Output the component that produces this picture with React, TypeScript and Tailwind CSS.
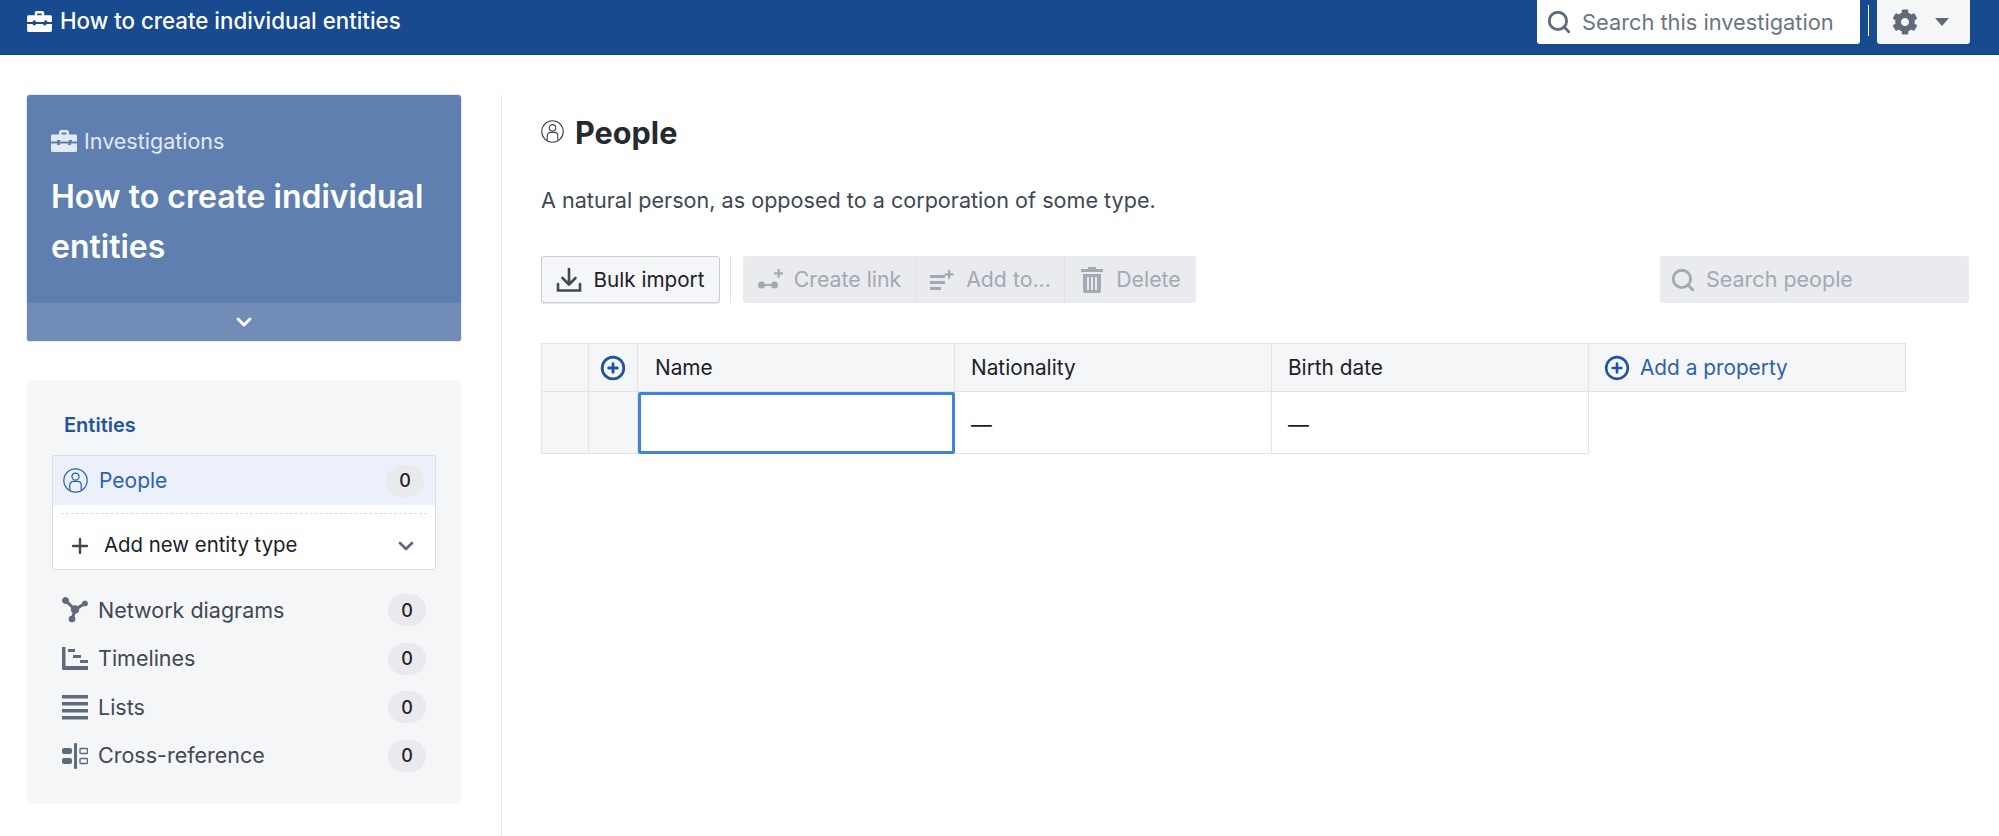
import React from 'react';
import { ChevronDown, CirclePlus, Plus, Search } from 'lucide-react';
import { FaCog } from 'react-icons/fa';

const BriefcaseIcon: React.FC<{ className?: string }> = ({ className }) => (
  <svg className={className} viewBox="0 0 26 22" fill="currentColor">
    <path d="M8 5V2.2C8 1 9 0 10.2 0h5.6C17 0 18 1 18 2.2V5h-2.6V2.6h-4.8V5z" />
    <path d="M1.5 4.5h23c.8 0 1.5.7 1.5 1.5v5.5h-5V10h-3v1.5H9V10H6v1.5H0V6c0-.8.7-1.5 1.5-1.5z" />
    <path d="M0 13.5h6V15h3v-1.5h8V15h3v-1.5h6v7c0 .8-.7 1.5-1.5 1.5h-23C.7 22 0 21.3 0 20.5z" />
  </svg>
);

const PersonIcon: React.FC<{ className?: string }> = ({ className }) => (
  <svg className={className} viewBox="0 0 24 24" fill="none" stroke="currentColor" strokeWidth="1.2">
    <circle cx="12" cy="12" r="11.2" />
    <circle cx="12" cy="8.2" r="3.4" />
    <path d="M6.5 21v-4.5c0-2.2 1.6-3.6 3.4-3.6h4.2c1.8 0 3.4 1.4 3.4 3.6V21" />
  </svg>
);

const NetworkIcon = () => (
  <svg className="w-[26px] h-[26px]" viewBox="0 0 26 26" fill="#5f6b7a" stroke="#5f6b7a">
    <path d="M4 4l9 8.5L22 7M13 12.500l-2.500 9" strokeWidth="3" fill="none" />
    <circle cx="3.500" cy="3.500" r="3" />
    <circle cx="23" cy="6.500" r="2.500" />
    <circle cx="13" cy="12.500" r="3.800" />
    <circle cx="10" cy="22" r="3" />
  </svg>
);

const TimelineIcon = () => (
  <svg className="w-[26px] h-[26px]" viewBox="0 0 26 26" fill="#5f6b7a">
    <path d="M0 1h3.500v19H26v4H1.500A1.500 1.500 0 0 1 0 22.500z" />
    <rect x="6" y="3" width="7" height="3" />
    <rect x="11" y="9" width="8" height="3" />
    <rect x="18" y="14" width="8" height="3" />
  </svg>
);

const ListIcon = () => (
  <svg className="w-[26px] h-[26px]" viewBox="0 0 26 26" fill="#5f6b7a">
    <rect x="0" y="1" width="26" height="3.500" />
    <rect x="0" y="8" width="26" height="3.500" />
    <rect x="0" y="15" width="26" height="3.500" />
    <rect x="0" y="22" width="26" height="3.500" />
  </svg>
);

const CrossRefIcon = () => (
  <svg className="w-[26px] h-[26px]" viewBox="0 0 26 26" fill="#5f6b7a">
    <rect x="12" y="0" width="3" height="26" rx="1" />
    <rect x="0" y="5" width="10" height="6" rx="2" />
    <rect x="0" y="15" width="10" height="6" rx="2" />
    <rect x="18" y="5.500" width="7.500" height="5" rx="1" fill="none" stroke="#5f6b7a" strokeWidth="1.400" />
    <rect x="18" y="15.500" width="7.500" height="5" rx="1" fill="none" stroke="#5f6b7a" strokeWidth="1.400" />
  </svg>
);

const DownloadIcon = () => (
  <svg className="w-[26px] h-[26px] text-[#404854]" viewBox="0 0 26 26" fill="none" stroke="currentColor" strokeWidth="2.600">
    <path d="M13 2v15M6.500 11l6.500 6.500 6.500-6.500" strokeLinecap="round" strokeLinejoin="round" />
    <path d="M2 17v6.500h22V17" strokeLinecap="round" />
  </svg>
);

const LinkAddIcon = () => (
  <svg className="w-[26px] h-[26px]" viewBox="0 0 26 26" fill="#a3a9b2">
    <circle cx="4.500" cy="18" r="3.500" />
    <circle cx="17.500" cy="18" r="3.500" />
    <rect x="6" y="17" width="10" height="2" />
    <path d="M20.500 2h2.200v3.300H26v2.200h-3.300v3.300h-2.200V7.500h-3.300V5.300h3.300z" />
  </svg>
);

const ListAddIcon = () => (
  <svg className="w-[26px] h-[26px]" viewBox="0 0 26 26" fill="#a3a9b2">
    <rect x="1" y="8" width="15" height="3" />
    <rect x="1" y="14" width="15" height="3" />
    <rect x="1" y="20" width="11" height="3" />
    <path d="M19 3h2.200v3.300h3.300v2.200h-3.300v3.300H19V8.500h-3.300V6.300H19z" />
  </svg>
);

const TrashIcon = () => (
  <svg className="w-[24px] h-[26px]" viewBox="0 0 24 26" fill="#a3a9b2">
    <path d="M8 0h8v2h7v3H1V2h7z" />
    <path fillRule="evenodd" d="M3 7h18v17a2 2 0 0 1-2 2H5a2 2 0 0 1-2-2zM7 10v13h2V10zM11 10v13h2V10zM15 10v13h2V10z" />
  </svg>
);

const rows = [
  { label: 'Network diagrams', icon: <NetworkIcon /> },
  { label: 'Timelines', icon: <TimelineIcon /> },
  { label: 'Lists', icon: <ListIcon /> },
  { label: 'Cross-reference', icon: <CrossRefIcon /> },
];

const Badge = () => (
  <span className="w-[38px] h-[32px] rounded-full bg-[#e8eaed] text-[#1c2127] text-[18px] font-medium flex items-center justify-center">0</span>
);

const App: React.FC = () => {
  return (
    <div className="w-[1999px] h-[836px] overflow-hidden bg-white font-['Inter',sans-serif] flex flex-col">
      <header className="h-[55px] shrink-0 bg-[#184a90] flex justify-between pl-[27px] pr-[29px]">
        <div className="flex items-center gap-[8px] h-[42px] text-white">
          <BriefcaseIcon className="w-[25px] h-[21px]" />
          <span className="text-[22.3px] font-medium">How to create individual entities</span>
        </div>
        <div className="flex items-start">
          <div className="w-[323px] h-[44px] bg-white rounded-b-[3px] flex items-center pl-[9px] gap-[10px] text-[#6b7480]">
            <Search className="w-[26px] h-[26px] text-[#5f6b7a]" strokeWidth={2.6} />
            <span className="text-[21.8px]">Search this investigation</span>
          </div>
          <div className="w-px h-[31px] bg-white mx-[8px] mt-[5px]" />
          <div className="w-[93px] h-[44px] bg-[#f5f6f8] rounded-b-[3px] flex items-center pl-[15px] gap-[17px] text-[#5f6b7a]">
            <FaCog className="w-[26px] h-[26px]" />
            <span className="w-0 h-0 border-x-[7px] border-x-transparent border-t-[8px] border-t-[#5f6b7a]" />
          </div>
        </div>
      </header>

      <div className="flex-1 flex pt-[40px]">
        <aside className="w-[434px] ml-[27px] shrink-0 flex flex-col gap-[39px]">
          <section className="h-[246px] rounded-[3px] overflow-hidden bg-[#5f7fb0] shadow-[0_0_0_1px_rgba(24,74,144,0.12)] flex flex-col text-white">
            <div className="flex-1 pl-[24px] pt-[30px]">
              <div className="flex items-center gap-[7px] text-[#e3e9f3]">
                <BriefcaseIcon className="w-[26px] h-[22px]" />
                <span className="text-[21.5px]">Investigations</span>
              </div>
              <h2 className="text-[32px] leading-[50px] font-semibold mt-[15px]">How to create individual entities</h2>
            </div>
            <div className="h-[38px] bg-[#728cb8] flex items-center justify-center">
              <ChevronDown className="w-[24px] h-[24px]" strokeWidth={3} />
            </div>
          </section>

          <section className="h-[424px] bg-[#f5f6f8] rounded-[3px] pt-[32px] px-[25px]">
            <h3 className="text-[20px] leading-[26px] font-semibold text-[#1f55a0] pl-[12px]">Entities</h3>
            <div className="mt-[17px] bg-white rounded-[2px] border border-[#d9dce1] h-[115px] flex flex-col">
              <div className="h-[49px] bg-[#ebf0fa] flex items-center pl-[10px] pr-[11px] gap-[11px] text-[#2e62ad]">
                <PersonIcon className="w-[25px] h-[25px]" />
                <span className="text-[21px] flex-1">People</span>
                <Badge />
              </div>
              <div className="mx-[8px] mt-[8px] border-t border-dashed border-[#d9dce1]" />
              <div className="flex-1 flex items-center pl-[15px] pr-[17px] pt-[8px] text-[#1c2127]">
                <Plus className="w-[24px] h-[24px] text-[#404854]" strokeWidth={2.4} />
                <span className="text-[20.4px] flex-1 ml-[12px]">Add new entity type</span>
                <ChevronDown className="w-[24px] h-[24px] text-[#5f6b7a]" strokeWidth={2.8} />
              </div>
            </div>
            <ul className="mt-[24px] flex flex-col gap-[16.5px] pl-[10px] pr-[10px]">
              {rows.map((r) => (
                <li key={r.label} className="h-[32px] flex items-center gap-[10px]">
                  {r.icon}
                  <span className="flex-1 text-[21.5px] text-[#404854]">{r.label}</span>
                  <Badge />
                </li>
              ))}
            </ul>
          </section>
        </aside>

        <main className="ml-[40px] flex-1 border-l border-[#e5e7eb] pl-[39px] pr-[30px]">
          <div className="flex items-center h-[44px] mt-[16px]">
            <PersonIcon className="w-[23px] h-[23px] text-[#404854] mb-[3px]" />
            <h1 className="ml-[11px] text-[30.6px] font-bold text-[#252a31]">People</h1>
          </div>
          <p className="mt-[30px] text-[21.6px] leading-[30px] text-[#404854]">A natural person, as opposed to a corporation of some type.</p>
          <div className="mt-[41px] flex items-stretch h-[47px]">
            <button className="w-[179px] rounded-[3px] bg-[#f5f6f8] border border-[#c9ced6] shadow-[0_1px_1px_rgba(17,20,24,0.1)] flex items-center justify-center gap-[11px] text-[20.7px] text-[#1c2127] whitespace-nowrap">
              <DownloadIcon />
              Bulk import
            </button>
            <div className="w-px bg-[#dfe2e6] ml-[10px] mr-[12px]" />
            <div className="flex rounded-[3px] bg-[#e9ebef] text-[#a3a9b2] text-[21.3px] whitespace-nowrap">
              <div className="w-[173px] flex items-center justify-center gap-[11px] border-r border-[#dfe2e6]">
                <LinkAddIcon />
                Create link
              </div>
              <div className="w-[149px] flex items-center justify-center gap-[11px] border-r border-[#dfe2e6]">
                <ListAddIcon />
                Add to...
              </div>
              <div className="w-[131px] flex items-center justify-center gap-[12px]">
                <TrashIcon />
                Delete
              </div>
            </div>
            <div className="ml-auto w-[309px] rounded-[3px] bg-[#e9ebef] flex items-center pl-[10px] gap-[10px] text-[#a3a9b2] text-[21.5px]">
              <Search className="w-[26px] h-[26px]" strokeWidth={2.6} />
              Search people
            </div>
          </div>

          <div className="mt-[40px] grid grid-cols-[48px_49px_317px_317px_317px_317px] grid-rows-[49px_62px] w-[1365px] text-[20.8px] text-[#1c2127]">
            <div className="bg-[#f5f6f8] border border-[#e0e3e8]" />
            <div className="bg-[#f5f6f8] border-y border-r border-[#e0e3e8] flex items-center justify-center">
              <CirclePlus className="w-[26px] h-[26px] text-[#1f55a0]" strokeWidth={2.6} />
            </div>
            <div className="bg-[#f5f6f8] border-y border-r border-[#e0e3e8] flex items-center pl-[17px]">Name</div>
            <div className="bg-[#f5f6f8] border-y border-r border-[#e0e3e8] flex items-center pl-[16px]">Nationality</div>
            <div className="bg-[#f5f6f8] border-y border-r border-[#e0e3e8] flex items-center pl-[16px]">Birth date</div>
            <div className="bg-[#f5f6f8] border-y border-r border-[#e0e3e8] flex items-center pl-[15px] gap-[10px] text-[#2e62ad]">
              <CirclePlus className="w-[26px] h-[26px] text-[#1f55a0]" strokeWidth={2.4} />
              Add a property
            </div>
            <div className="bg-[#f5f6f8] border-x border-b border-[#e0e3e8]" />
            <div className="bg-[#f5f6f8] border-r border-b border-[#e0e3e8]" />
            <div className="border-[3px] border-[#3f84d9] rounded-[2px] bg-white" />
            <div className="border-r border-b border-[#e0e3e8] flex items-center pl-[16px] pt-[4px]">—</div>
            <div className="border-r border-b border-[#e0e3e8] flex items-center pl-[16px] pt-[4px]">—</div>
            <div />
          </div>
        </main>
      </div>
    </div>
  );
};

export default App;
